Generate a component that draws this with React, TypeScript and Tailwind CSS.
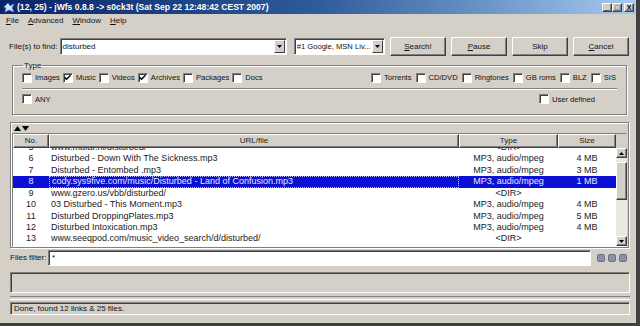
import type { ReactNode } from 'react';

const raised = 'border border-t-white border-l-white border-r-[#404040] border-b-[#404040] shadow-[inset_-1px_-1px_0_#808080]';
const sunken = 'border border-t-[#808080] border-l-[#808080] border-r-white border-b-white shadow-[inset_1px_1px_0_#404040]';
const etched = 'border border-[#808080] shadow-[inset_1px_1px_0_#ffffff,1px_1px_0_#ffffff]';

type Row = { no: number; url: string; type: string; size: string; sel?: boolean };

const rows: Row[] = [
  { no: 5,  url: 'www.mafar.nl/disturbed/', type: '<DIR>', size: '' },
  { no: 6,  url: 'Disturbed - Down With The Sickness.mp3', type: 'MP3, audio/mpeg', size: '4 MB' },
  { no: 7,  url: 'Disturbed - Entombed .mp3', type: 'MP3, audio/mpeg', size: '3 MB' },
  { no: 8,  url: 'cody.sys9five.com/music/Disturbed - Land of Confusion.mp3', type: 'MP3, audio/mpeg', size: '1 MB', sel: true },
  { no: 9,  url: 'www.gzero.us/vbb/disturbed/', type: '<DIR>', size: '' },
  { no: 10, url: '03 Disturbed - This Moment.mp3', type: 'MP3, audio/mpeg', size: '4 MB' },
  { no: 11, url: 'Disturbed DroppingPlates.mp3', type: 'MP3, audio/mpeg', size: '5 MB' },
  { no: 12, url: 'Disturbed Intoxication.mp3', type: 'MP3, audio/mpeg', size: '4 MB' },
  { no: 13, url: 'www.seeqpod.com/music_video_search/d/disturbed/', type: '<DIR>', size: '' },
];

function Check({ label, checked }: { label: string; checked?: boolean }) {
  return (
    <label className="flex items-center gap-[3px]">
      <span className={`w-[10px] h-[10px] bg-white flex items-center justify-center ${sunken}`}>
        {checked && (
          <svg width="7" height="7" viewBox="0 0 7 7">
            <path d="M0.5 3.2 L2.5 5.2 L6.5 1.2" stroke="#000" strokeWidth="1.4" fill="none" />
          </svg>
        )}
      </span>
      <span>{label}</span>
    </label>
  );
}

function Btn({ children }: { children: ReactNode }) {
  return (
    <button className={`w-[56px] h-[19px] bg-[#d4d0c8] text-[8px] text-[#111] flex items-center justify-center ${raised}`}>
      {children}
    </button>
  );
}

function Arrow({ up }: { up?: boolean }) {
  return (
    <div className={`w-[11px] h-[10px] bg-[#d4d0c8] flex items-center justify-center ${raised}`}>
      <svg width="5" height="3" viewBox="0 0 5 3">
        <path d={up ? 'M0 3 L2.5 0 L5 3 Z' : 'M0 0 L2.5 3 L5 0 Z'} fill="#000" />
      </svg>
    </div>
  );
}

export default function App() {
  return (
    <div className="w-[640px] h-[326px] bg-[#d4d0c8] flex flex-col overflow-hidden border-r-[4px] border-b-[3px] border-r-[#404040] border-b-[#404040] font-['Liberation_Sans',Arial,sans-serif] text-[8px] text-[#111]">
      {/* Title bar */}
      <div className="h-[14px] bg-linear-to-r from-[#0a246a] via-[#2e5c9a] to-[#a6caf0] flex items-center pl-[3px] pr-[2px]">
        <svg width="12" height="11" viewBox="0 0 12 11" className="mr-[2px]">
          <path d="M1 5 L5 1 L7 4 L11 2 L9 6 L11 10 L6 8 L2 10 L3 6 Z" fill="#cfe0ff" stroke="#6b8fc9" strokeWidth="0.6" />
        </svg>
        <span className="text-white font-bold text-[8.6px]">(12, 25) - jWfs 0.8.8 -&gt; s0ck3t (Sat Sep 22 12:48:42 CEST 2007)</span>
        <div className="ml-auto flex items-center">
          {['_', '□', 'X'].map((c, i) => (
            <div key={c} className={`w-[10px] h-[9px] bg-[#d4d0c8] flex items-center justify-center text-[7px] leading-none font-bold text-black ${raised} ${i === 2 ? 'ml-[2px]' : ''}`}>{c}</div>
          ))}
        </div>
      </div>

      {/* Menu */}
      <div className="h-[14px] flex items-center gap-[9px] pl-[6px]">
        <span><u>F</u>ile</span>
        <span><u>A</u>dvanced</span>
        <span><u>W</u>indow</span>
        <span><u>H</u>elp</span>
      </div>

      {/* Search row */}
      <div className="mt-[9px] h-[19px] flex items-center pl-[9px] pr-[7px]">
        <span className="w-[51px]">File(s) to find:</span>
        <div className={`w-[229px] h-[17px] bg-white flex items-center pl-[2px] pr-[1px] ${sunken}`}>
          <span className="flex-1">disturbed</span>
          <div className="w-[11px] h-[13px] bg-[#d4d0c8] flex items-center justify-center border border-t-white border-l-white border-r-[#404040] border-b-[#404040]">
            <svg width="5" height="3" viewBox="0 0 5 3"><path d="M0 0 L2.5 3 L5 0 Z" fill="#000" /></svg>
          </div>
        </div>
        <div className={`ml-[7px] w-[92px] h-[17px] bg-white flex items-center pl-[2px] pr-[1px] ${sunken}`}>
          <span className="flex-1 whitespace-nowrap overflow-hidden text-[7.6px]">#1 Google, MSN Liv...</span>
          <div className="w-[11px] h-[13px] bg-[#d4d0c8] flex items-center justify-center border border-t-white border-l-white border-r-[#404040] border-b-[#404040]">
            <svg width="5" height="3" viewBox="0 0 5 3"><path d="M0 0 L2.5 3 L5 0 Z" fill="#000" /></svg>
          </div>
        </div>
        <div className="ml-[5px] flex gap-[5px]">
          <Btn><u>S</u>earch!</Btn>
          <Btn><u>P</u>ause</Btn>
          <Btn>Skip</Btn>
          <Btn><u>C</u>ancel</Btn>
        </div>
      </div>

      {/* Type group */}
      <fieldset className={`mt-[5px] ml-[12px] mr-[9px] h-[54px] px-[9px] text-[7.6px] ${etched}`}>
        <legend className="ml-[1px] px-[1px] leading-[9px] text-[8px]">Type</legend>
        <div className="h-[16px] flex items-center justify-between">
          <div className="flex items-center gap-[3px]">
            <Check label="Images" />
            <Check label="Music" checked />
            <Check label="Videos" />
            <Check label="Archives" checked />
            <Check label="Packages" />
            <Check label="Docs" />
          </div>
          <div className="flex items-center gap-[4px] pr-[1px]">
            <Check label="Torrents" />
            <Check label="CD/DVD" />
            <Check label="Ringtones" />
            <Check label="GB roms" />
            <Check label="BLZ" />
            <Check label="SIS" />
          </div>
        </div>
        <div className="mt-[2px] h-[2px] border-t border-t-[#808080] border-b border-b-white" />
        <div className="h-[19px] flex items-center justify-between pr-[22px]">
          <Check label="ANY" />
          <Check label="User defined" />
        </div>
      </fieldset>

      {/* Results panel */}
      <div className={`mt-[7px] ml-[10px] mr-[7px] h-[126px] flex flex-col ${etched}`}>
        <div className="h-[10px] flex items-center pl-[3px] gap-[1px]">
          <svg width="7" height="5" viewBox="0 0 7 5"><path d="M0 5 L3.5 0 L7 5 Z" fill="#000" /></svg>
          <svg width="7" height="5" viewBox="0 0 7 5"><path d="M0 0 L3.5 5 L7 0 Z" fill="#000" /></svg>
        </div>
        <div className={`mx-[1px] flex-1 flex ${sunken}`}>
          <div className="w-[603px] flex flex-col">
            <div className="h-[14px] flex text-[8px] text-[#222]">
              <div className={`w-[36px] flex items-center justify-center ${raised}`}>No.</div>
              <div className={`w-[410px] flex items-center justify-center ${raised}`}>URL/file</div>
              <div className={`w-[99px] flex items-center justify-center ${raised}`}>Type</div>
              <div className={`w-[58px] flex items-center justify-center ${raised}`}>Size</div>
            </div>
            <div className="flex-1 bg-white overflow-hidden text-[9px] text-[#222]">
              <div className="-mt-[6px]">
                {rows.map(r => (
                  <div key={r.no} className={`h-[11.45px] flex items-center ${r.sel ? 'bg-[#0c10d4] text-[#e8e8ff]' : ''}`}>
                    <div className="w-[36px] text-center">{r.no}</div>
                    <div className={`w-[410px] h-full flex items-center pl-[2px] whitespace-nowrap ${r.sel ? 'border border-dotted border-[#b8b8ff]' : ''}`}>{r.url}</div>
                    <div className="w-[99px] text-center">{r.type}</div>
                    <div className="w-[58px] text-center">{r.size}</div>
                  </div>
                ))}
              </div>
            </div>
          </div>
          <div className="flex-1 flex flex-col">
            <div className="h-[14px] bg-[#d4d0c8]" />
            <div className="flex-1 flex flex-col bg-[#ebe9e4]">
              <Arrow up />
              <div className="h-[4px]" />
              <div className={`h-[38px] bg-[#d4d0c8] ${raised}`} />
              <div className="flex-1" />
              <Arrow />
            </div>
          </div>
        </div>
      </div>

      {/* Files filter */}
      <div className="mt-[2px] h-[16px] flex items-center pl-[10px] pr-[8px]">
        <span className="w-[38px]">Files filter:</span>
        <div className={`w-[543px] h-[16px] bg-white flex items-center pl-[3px] ${sunken}`}>*</div>
        <div className="ml-[6px] flex gap-[3px]">
          {[0, 1, 2].map(i => (
            <div key={i} className="w-[8px] h-[8px] rounded-[2px] bg-[#8a90a6] border border-[#6b7088]" />
          ))}
        </div>
      </div>

      {/* Progress */}
      <div className={`mt-[6px] ml-[10px] mr-[6px] h-[21px] ${sunken}`} />
      <div className="mt-[3px] ml-[10px] mr-[6px] h-[4px] border-y border-t-[#808080] border-b-white" />

      {/* Status */}
      <div className={`mt-[2px] ml-[10px] mr-[6px] h-[13px] flex items-center pl-[3px] ${sunken}`}>
        Done, found 12 links &amp; 25 files.
      </div>
    </div>
  );
}
